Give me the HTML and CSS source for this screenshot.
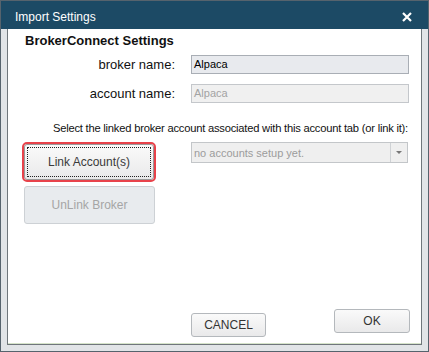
FILE: index.html
```html
<!DOCTYPE html>
<html lang="en">
<head>
    <meta charset="UTF-8">
    <title>Import Settings</title>
    <link rel="stylesheet" href="styles.css">
</head>
<body>
    <div class="window">
        <div class="titlebar">
            <span class="title">Import Settings</span>
            <svg class="close" width="10" height="10" viewBox="0 0 10 10">
                <path d="M1 1 L9 9 M9 1 L1 9" stroke="#fff" stroke-width="2.2" fill="none"/>
            </svg>
        </div>
        <div class="panel">
            <h1>BrokerConnect Settings</h1>
            <div class="fields">
                <label>broker name:</label>
                <div class="input">Alpaca</div>
                <label>account name:</label>
                <div class="input disabled">Alpaca</div>
            </div>
            <p class="hint">Select the linked broker account associated with this account tab (or link it):</p>
            <div class="link-row">
                <div class="link-buttons">
                    <button class="btn link focused">Link Account(s)</button>
                    <button class="btn unlink" disabled>UnLink Broker</button>
                </div>
                <div class="dropdown">
                    <span>no accounts setup yet.</span>
                    <span class="arrow"></span>
                </div>
            </div>
            <div class="footer">
                <button class="btn cancel">CANCEL</button>
                <button class="btn ok">OK</button>
            </div>
        </div>
    </div>
</body>
</html>
```

FILE: styles.css
```css
* {
    box-sizing: border-box;
    margin: 0;
    padding: 0;
}
body {
    font-family: "Liberation Sans", Arial, sans-serif;
    background: #ffffff;
}
.window {
    width: 429px;
    height: 352px;
    border: 1px solid #56636d;
    background: #e1e4e7;
    display: flex;
    flex-direction: column;
}
.titlebar {
    height: 28px;
    background: #1c4a65;
    display: flex;
    align-items: center;
    justify-content: space-between;
    padding: 0 16px 0 14px;
    color: #fff;
}
.title {
    font-size: 12px;
    padding-top: 4px;
}
.close {
    margin-top: 4px;
}
.panel {
    flex: 1;
    margin: 0 6px 6px 6px;
    background: #fff;
    border: 1px solid #6f767b;
    border-top: none;
    box-shadow: inset 0 -1px 0 #d5e3c9;
    padding: 4px 0 0 16px;
    display: flex;
    flex-direction: column;
}
h1 {
    font-size: 13px;
    font-weight: bold;
    line-height: 16px;
    margin-left: 1px;
    color: #111;
}
.fields {
    display: grid;
    grid-template-columns: 151px 218px;
    column-gap: 16px;
    row-gap: 10px;
    margin-top: 6px;
}
.fields label {
    font-size: 13px;
    text-align: right;
    line-height: 19px;
    color: #111;
}
.input {
    height: 19px;
    border: 1px solid #a9aeb5;
    background: #e8eaee;
    font-size: 11px;
    line-height: 17px;
    padding-left: 2px;
    color: #000;
}
.input.disabled {
    background: #f0f0f0;
    border-color: #c4c7cb;
    color: #a3a3a3;
}
.hint {
    font-size: 11.2px;
    letter-spacing: -0.22px;
    line-height: 16px;
    margin-top: 17px;
    white-space: nowrap;
    text-align: right;
    padding-right: 13px;
    color: #111;
}
.link-row {
    display: grid;
    grid-template-columns: 151px 217px;
    column-gap: 16px;
    margin-top: 6px;
    align-items: start;
}
.link-buttons {
    display: flex;
    flex-direction: column;
    gap: 6px;
}
.btn {
    font-family: "Liberation Sans", Arial, sans-serif;
    font-size: 12px;
    color: #333;
    border: 1px solid #b4b8bc;
    border-radius: 3px;
    background: linear-gradient(#fafafa, #e9e9ea);
    position: relative;
}
.link {
    width: 130px;
    height: 36px;
    margin-top: 2px;
    border-color: #9a9a9a;
    color: #3a3a3a;
}
.focused {
    outline: 2px solid #e8434b;
}
.focused::after {
    content: "";
    position: absolute;
    inset: 2px;
    border: 1px dotted #222;
}
.unlink {
    width: 131px;
    height: 38px;
    background: #e8ebee;
    border-color: #cdd1d5;
    color: #a5a5a5;
}
.dropdown {
    height: 21px;
    border: 1px solid #c3c6c9;
    background: #efefef;
    display: flex;
    align-items: center;
    justify-content: space-between;
    font-size: 11px;
    color: #9c9c9c;
    padding-left: 2px;
}
.arrow {
    width: 17px;
    height: 19px;
    border-left: 1px solid #cfd2d5;
    display: flex;
    align-items: center;
    justify-content: center;
}
.arrow::before {
    content: "";
    border-left: 3px solid transparent;
    border-right: 3px solid transparent;
    border-top: 3px solid #777;
}
.footer {
    margin-top: auto;
    display: flex;
    justify-content: flex-end;
    align-items: flex-end;
    gap: 68px;
    padding: 0 11px 7px 0;
}
.cancel {
    width: 75px;
    height: 24px;
}
.ok {
    width: 76px;
    height: 24px;
    margin-bottom: 4px;
}
```
